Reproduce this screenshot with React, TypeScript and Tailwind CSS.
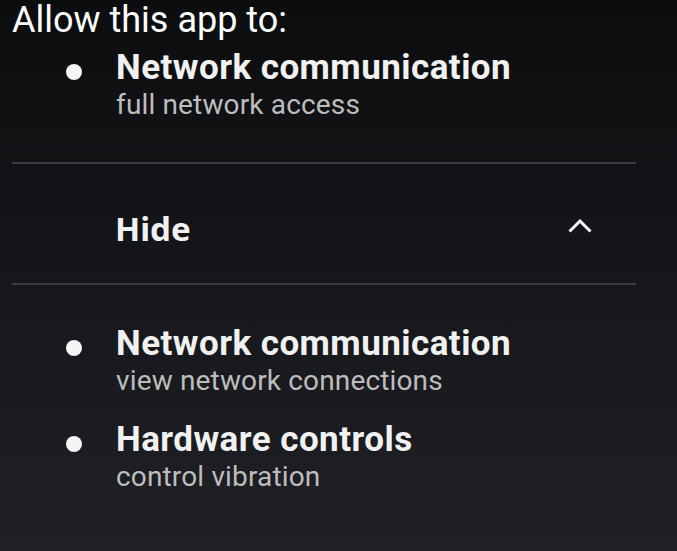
import React from "react";

function Item({ title, sub }: { title: string; sub: string }) {
  return (
    <div className="flex pl-[54px]">
      <div className="mt-[14px] h-[16px] w-[16px] shrink-0 rounded-full bg-[#f5f5f5]" />
      <div className="ml-[34px] flex flex-col">
        <div className="text-[35px] font-bold leading-[36px] tracking-[0.45px] text-[#f1f1f1]">{title}</div>
        <div className="text-[28px] leading-[38px] tracking-[0.15px] text-[#bdbdbd]">{sub}</div>
      </div>
    </div>
  );
}

export default function App() {
  return (
    <div
      className="h-[551px] w-[677px] overflow-hidden bg-linear-to-b from-[#0c0d0f] to-[#1f2125] px-[12px]"
      style={{ fontFamily: "Roboto, 'Liberation Sans', sans-serif" }}
    >
      <div className="w-[624px]">
        <div className="text-[36px] leading-[40px] text-white">Allow this app to:</div>
        <div className="mt-[10px]">
          <Item title="Network communication" sub="full network access" />
        </div>
        <div className="mt-[38px] h-[2px] bg-[#3a3c3f]" />
        <div className="flex h-[119px] items-center justify-between pl-[103px] pr-[44px]">
          <div
            className="mt-[11px] text-[33px] font-bold leading-[40px] text-[#f1f1f1]"
            style={{ fontFamily: "'Noto Sans', 'Open Sans', sans-serif" }}
          >
            Hide
          </div>
          <svg width="24" height="14" viewBox="0 0 24 14" className="mt-[4px]">
            <polyline
              points="1.5,12.5 12,2 22.5,12.5"
              fill="none"
              stroke="#f5f5f5"
              strokeWidth="3"
            />
          </svg>
        </div>
        <div className="h-[2px] bg-[#3a3c3f]" />
        <div className="mt-[41px] flex flex-col gap-[22px]">
          <Item title="Network communication" sub="view network connections" />
          <Item title="Hardware controls" sub="control vibration" />
        </div>
      </div>
    </div>
  );
}
